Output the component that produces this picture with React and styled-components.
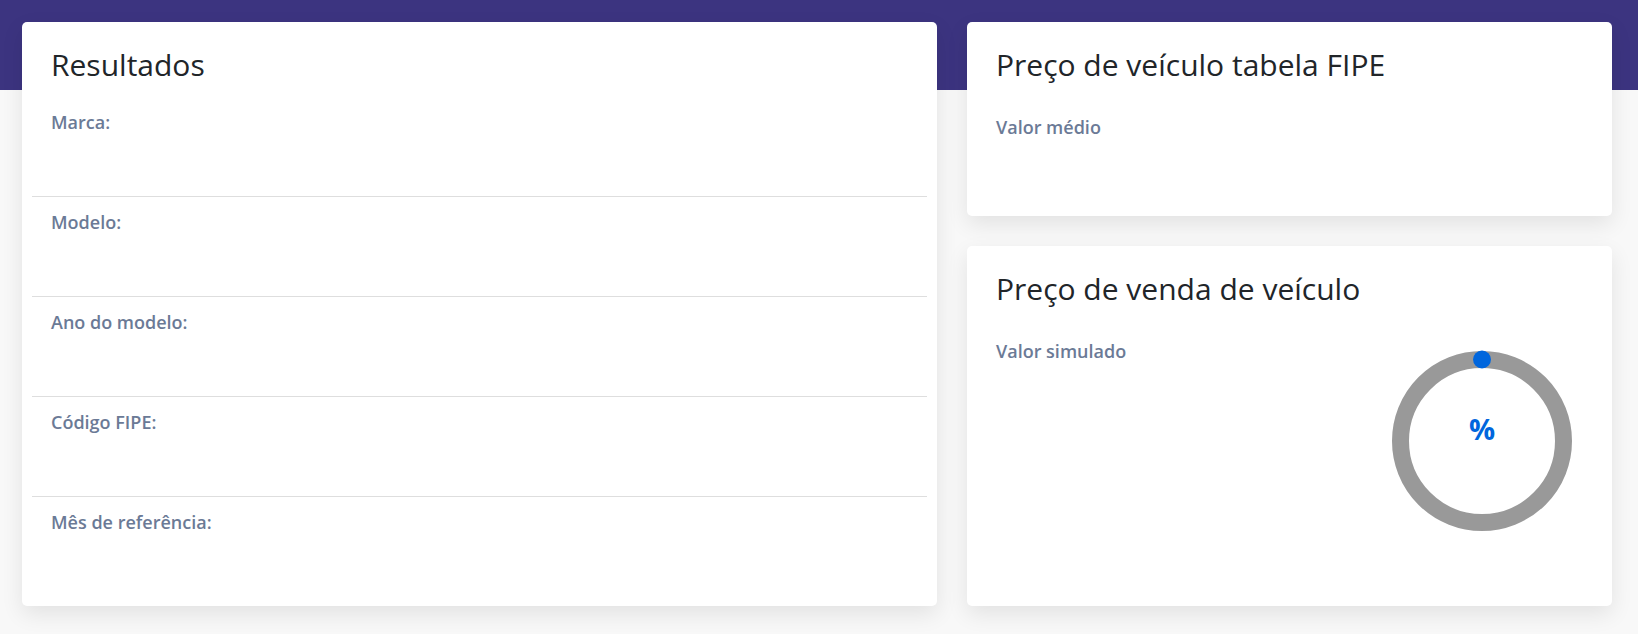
import React from "react";
import styled, { createGlobalStyle } from "styled-components";

const GlobalStyle = createGlobalStyle`
  * { box-sizing: border-box; }
  html, body { margin: 0; }
  body {
    font-family: "Open Sans", "Liberation Sans", sans-serif;
    background: linear-gradient(#3c3480 0, #3c3480 90px, #f8f8f8 90px) no-repeat;
    background-color: #f8f8f8;
    min-height: 634px;
  }
`;

const Page = styled.div`
  display: grid;
  grid-template-columns: 915fr 645fr;
  gap: 30px;
  padding: 22px 26px 27px 22px;
`;

const Card = styled.div`
  background: #fff;
  border-radius: 5px;
  box-shadow: 0 8px 22px rgba(0, 0, 0, 0.09);
  padding: ${(p) => p.$pad || "25px 30px 30px 29px"};
  display: flex;
  flex-direction: column;
  flex: ${(p) => (p.$grow ? 1 : "none")};
`;

const Column = styled.div`
  display: flex;
  flex-direction: column;
  gap: 30px;
`;

const Title = styled.h2`
  margin: 0;
  font-size: 30px;
  line-height: 36px;
  font-weight: 400;
  color: #212529;
  padding-left: ${(p) => p.$indent || "0"};
`;

const Label = styled.div`
  font-size: 18px;
  line-height: 27px;
  font-weight: 600;
  color: #6b7a96;
`;

const ResultList = styled.div`
  margin-top: 14px;
  display: flex;
  flex-direction: column;
`;

const ResultRow = styled.div`
  height: 100px;
  padding: 12px 19px 0;
  border-bottom: 1px solid #dedede;

  &:last-child {
    border-bottom: none;
    height: 99px;
  }
`;

const Section = styled.div`
  margin-top: 31px;
  min-height: ${(p) => p.$minH || "0"};
  display: flex;
  justify-content: space-between;
  align-items: flex-start;
`;

const Gauge = styled.svg`
  display: block;
  margin-top: 3px;
  flex: none;
`;

const results = ["Marca:", "Modelo:", "Ano do modelo:", "Código FIPE:", "Mês de referência:"];

const PercentGauge = () => (
  <Gauge width="200" height="200" viewBox="0 0 200 200">
    <circle cx="100" cy="100" r="81.5" fill="none" stroke="#999999" strokeWidth="17" />
    <circle cx="100" cy="18.5" r="9" fill="#0066dd" />
    <text
      x="100"
      y="99"
      textAnchor="middle"
      fill="#0066dd"
      fontFamily="'Open Sans', 'Liberation Sans', sans-serif"
      fontWeight="700"
      fontSize="29"
    >
      %
    </text>
  </Gauge>
);

export default function App() {
  return (
    <>
      <GlobalStyle />
      <Page>
        <Card $pad="25px 10px 10px 10px">
          <Title $indent="19px">Resultados</Title>
          <ResultList>
            {results.map((r) => (
              <ResultRow key={r}>
                <Label>{r}</Label>
              </ResultRow>
            ))}
          </ResultList>
        </Card>
        <Column>
          <Card>
            <Title>Preço de veículo tabela FIPE</Title>
            <Section $minH="72px">
              <Label>Valor médio</Label>
            </Section>
          </Card>
          <Card $grow>
            <Title>Preço de venda de veículo</Title>
            <Section>
              <Label>Valor simulado</Label>
              <PercentGauge />
            </Section>
          </Card>
        </Column>
      </Page>
    </>
  );
}
